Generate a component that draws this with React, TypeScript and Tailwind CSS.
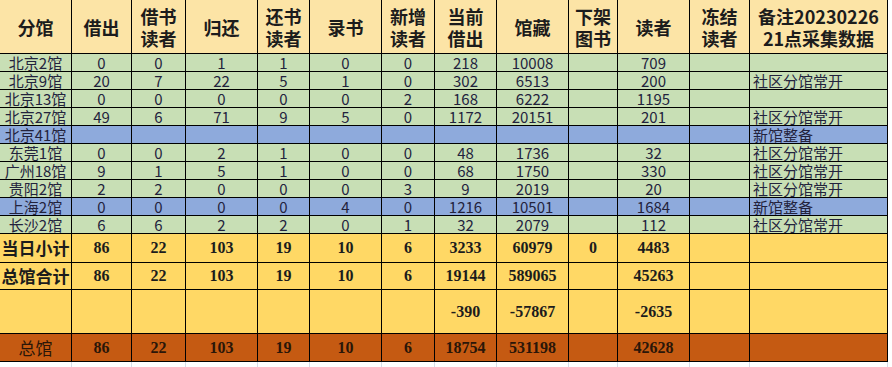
import React from "react"

const cols = "grid w-[888px] grid-cols-[72px_60px_54px_72px_52px_72px_53px_62px_72px_49px_72px_60px_138px]"

type Cell = string | number

const headers: string[][] = [
    ["分馆"],
    ["借出"],
    ["借书", "读者"],
    ["归还"],
    ["还书", "读者"],
    ["录书"],
    ["新增", "读者"],
    ["当前", "借出"],
    ["馆藏"],
    ["下架", "图书"],
    ["读者"],
    ["冻结", "读者"],
    ["备注20230226", "21点采集数据"],
]

const rows: { cells: Cell[]; blue?: boolean }[] = [
    { cells: ["北京2馆", 0, 0, 1, 1, 0, 0, 218, 10008, "", 709, "", ""] },
    { cells: ["北京9馆", 20, 7, 22, 5, 1, 0, 302, 6513, "", 200, "", "社区分馆常开"] },
    { cells: ["北京13馆", 0, 0, 0, 0, 0, 2, 168, 6222, "", 1195, "", ""] },
    { cells: ["北京27馆", 49, 6, 71, 9, 5, 0, 1172, 20151, "", 201, "", "社区分馆常开"] },
    { cells: ["北京41馆", "", "", "", "", "", "", "", "", "", "", "", "新馆整备"], blue: true },
    { cells: ["东莞1馆", 0, 0, 2, 1, 0, 0, 48, 1736, "", 32, "", "社区分馆常开"] },
    { cells: ["广州18馆", 9, 1, 5, 1, 0, 0, 68, 1750, "", 330, "", "社区分馆常开"] },
    { cells: ["贵阳2馆", 2, 2, 0, 0, 0, 3, 9, 2019, "", 20, "", "社区分馆常开"] },
    { cells: ["上海2馆", 0, 0, 0, 0, 4, 0, 1216, 10501, "", 1684, "", "新馆整备"], blue: true },
    { cells: ["长沙2馆", 6, 6, 2, 2, 0, 1, 32, 2079, "", 112, "", "社区分馆常开"] },
]

const totals: Cell[][] = [
    ["当日小计", 86, 22, 103, 19, 10, 6, 3233, 60979, 0, 4483, "", ""],
    ["总馆合计", 86, 22, 103, 19, 10, 6, 19144, 589065, "", 45263, "", ""],
    ["", "", "", "", "", "", "", -390, -57867, "", -2635, "", ""],
]

const mainRow: Cell[] = ["总馆", 86, 22, 103, 19, 10, 6, 18754, 531198, "", 42628, "", ""]

const cjk = "font-['Noto_Sans_CJK_SC',sans-serif]"
const serif = "font-['Liberation_Serif','Noto_Sans_CJK_SC',serif]"

export default function App() {
    return (
        <div className="w-[892px] h-[367px] bg-white overflow-hidden">
            {/* 表头 */}
            <div className={`${cols} h-[54px] bg-[#fce4a6] text-[#1c1c1c] font-bold text-[18px] leading-[22px] ${cjk}`}>
                {headers.map((h, i) => (
                    <div key={i} className="border-r border-b border-black flex flex-col items-center justify-center">
                        {h.map((line) => (
                            <span key={line}>{line}</span>
                        ))}
                    </div>
                ))}
            </div>

            {/* 各分馆 */}
            {rows.map((r, ri) => (
                <div
                    key={ri}
                    className={`${cols} h-[18px] text-[15px] leading-[17px] text-[#23233d] ${cjk} ${r.blue ? "bg-[#8eaadc]" : "bg-[#c8dfb5]"}`}
                >
                    {r.cells.map((c, ci) => (
                        <div
                            key={ci}
                            className={`border-r border-b border-black flex items-center whitespace-nowrap ${ci === 12 ? "justify-start pl-[3px]" : "justify-center"}`}
                        >
                            {c}
                        </div>
                    ))}
                </div>
            ))}

            {/* 合计 */}
            {totals.map((r, ri) => (
                <div
                    key={ri}
                    className={`${cols} ${ri === 0 ? "h-[29px]" : ri === 1 ? "h-[27px]" : "h-[44px]"} bg-[#ffd865] text-[#1c1c1c] font-bold`}
                >
                    {r.map((c, ci) => (
                        <div
                            key={ci}
                            className={`border-r border-b border-black flex items-center justify-center whitespace-nowrap ${ci === 0 ? `${cjk} text-[17px]` : `${serif} text-[16px]`}`}
                        >
                            {c}
                        </div>
                    ))}
                </div>
            ))}

            {/* 总馆 */}
            <div className={`${cols} h-[28px] bg-[#c55a12] text-[#2a1608]`}>
                {mainRow.map((c, ci) => (
                    <div
                        key={ci}
                        className={`border-r border-b border-black flex items-center justify-center whitespace-nowrap ${ci === 0 ? `${cjk} text-[17px] font-normal` : `${serif} text-[16px] font-bold`}`}
                    >
                        {c}
                    </div>
                ))}
            </div>

            {/* 底部网格线 */}
            <div className={`${cols} h-[6px]`}>
                {mainRow.map((_, ci) => (
                    <div key={ci} className="border-r border-[#d6dde8]" />
                ))}
            </div>
        </div>
    )
}
